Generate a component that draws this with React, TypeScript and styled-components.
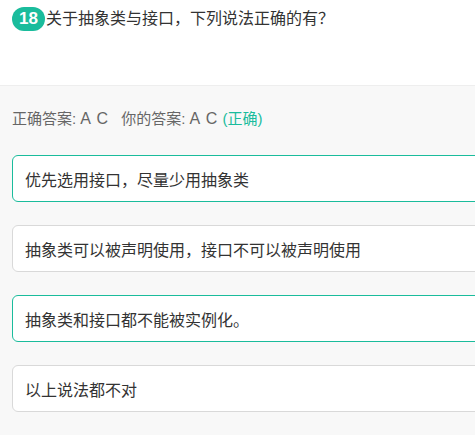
import React from 'react';
import styled, { createGlobalStyle } from 'styled-components';

const GlobalStyle = createGlobalStyle`
	html, body {
		margin: 0;
		padding: 0;
		background: #f8f8f8;
		overflow: hidden;
	}
	body {
		font-family: 'Liberation Sans', 'Noto Sans CJK SC', sans-serif;
	}
`;

const options = [
	{ text: '优先选用接口，尽量少用抽象类', correct: true },
	{ text: '抽象类可以被声明使用，接口不可以被声明使用', correct: false },
	{ text: '抽象类和接口都不能被实例化。', correct: true },
	{ text: '以上说法都不对', correct: false },
];

const App = () => {
	return (
		<Page>
			<GlobalStyle />
			<QuestionHeader>
				<Badge>18</Badge>
				<QuestionText>关于抽象类与接口，下列说法正确的有？</QuestionText>
			</QuestionHeader>
			<AnswerSection>
				<AnswerLine>
					正确答案: <Letters>A C</Letters>
					<Gap />
					你的答案: <Letters>A C</Letters> <Verdict>(正确)</Verdict>
				</AnswerLine>
				<OptionList>
					{options.map((o) => (
						<OptionCard key={o.text} $correct={o.correct}>
							{o.text}
						</OptionCard>
					))}
				</OptionList>
			</AnswerSection>
		</Page>
	);
};

const Page = styled.div`
	width: 475px;
	height: 435px;
	overflow: hidden;
	background: #f8f8f8;
`;

const QuestionHeader = styled.div`
	display: flex;
	align-items: flex-start;
	height: 86px;
	box-sizing: border-box;
	padding: 7px 12px 0;
	background: #fff;
	border-bottom: 1px solid #eeeeee;
`;

const Badge = styled.span`
	display: inline-flex;
	align-items: center;
	justify-content: center;
	width: 33px;
	height: 24px;
	border-radius: 12px;
	background: #1abc9c;
	color: #fff;
	font-size: 17px;
	font-weight: bold;
	flex-shrink: 0;
`;

const QuestionText = styled.span`
	font-size: 16px;
	line-height: 24px;
	color: #333;
	margin-left: 1px;
`;

const AnswerSection = styled.div`
	padding: 21px 0 0 12px;
`;

const AnswerLine = styled.div`
	font-size: 15px;
	line-height: 24px;
	color: #666;
`;

const Letters = styled.span`
	font-size: 16px;
	letter-spacing: 1px;
`;

const Gap = styled.span`
	display: inline-block;
	width: 12px;
`;

const Verdict = styled.span`
	color: #1abc9c;
`;

const OptionList = styled.div`
	display: flex;
	flex-direction: column;
	gap: 23px;
	margin-top: 24px;
	width: 520px;
`;

const OptionCard = styled.div<{ $correct: boolean }>`
	display: flex;
	align-items: center;
	height: 47px;
	box-sizing: border-box;
	padding: 0 12px;
	background: #fff;
	border: 1px solid ${(p) => (p.$correct ? '#1abc9c' : '#d9d9d9')};
	border-radius: 6px;
	font-size: 16px;
	color: #333;
`;

export default App;
